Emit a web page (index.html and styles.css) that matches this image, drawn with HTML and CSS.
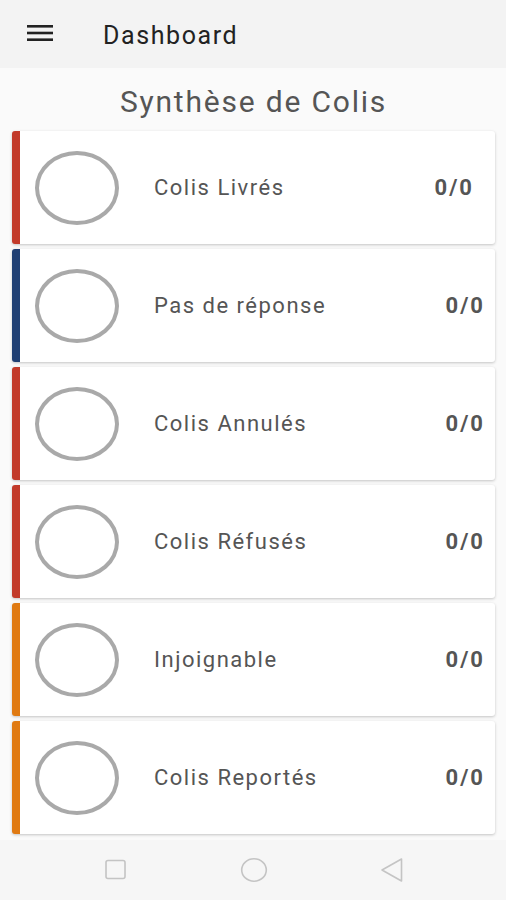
FILE: index.html
```html
<!DOCTYPE html>
<html lang="fr">
<head>
  <meta charset="UTF-8">
  <title>Dashboard</title>
  <link rel="stylesheet" href="styles.css">
</head>
<body>
  <header class="topbar">
    <svg class="menu-icon" width="26" height="18" viewBox="0 0 26 18">
      <rect x="0" y="1" width="26" height="2.6" fill="#222"/>
      <rect x="0" y="7.7" width="26" height="2.6" fill="#222"/>
      <rect x="0" y="14.4" width="26" height="2.6" fill="#222"/>
    </svg>
    <h1>Dashboard</h1>
  </header>

  <main class="content">
    <h2>Synthèse de Colis</h2>

    <div class="card red first">
      <div class="ring"></div>
      <span class="label">Colis Livrés</span>
      <span class="value">0/0</span>
    </div>

    <div class="card blue">
      <div class="ring"></div>
      <span class="label">Pas de réponse</span>
      <span class="value">0/0</span>
    </div>

    <div class="card red">
      <div class="ring"></div>
      <span class="label">Colis Annulés</span>
      <span class="value">0/0</span>
    </div>

    <div class="card red">
      <div class="ring"></div>
      <span class="label">Colis Réfusés</span>
      <span class="value">0/0</span>
    </div>

    <div class="card orange">
      <div class="ring"></div>
      <span class="label">Injoignable</span>
      <span class="value">0/0</span>
    </div>

    <div class="card orange">
      <div class="ring"></div>
      <span class="label">Colis Reportés</span>
      <span class="value">0/0</span>
    </div>
  </main>

  <nav class="navbar">
    <svg width="24" height="24" viewBox="0 0 24 24">
      <rect x="2" y="2.5" width="19" height="18" rx="2" fill="none" stroke="#c4c4c4" stroke-width="1.6"/>
    </svg>
    <svg width="28" height="26" viewBox="0 0 28 26">
      <ellipse cx="14" cy="13" rx="12.3" ry="11.2" fill="none" stroke="#c4c4c4" stroke-width="1.6"/>
    </svg>
    <svg width="24" height="26" viewBox="0 0 24 26">
      <path d="M21.5 2 L21.5 24 L2 13 Z" fill="none" stroke="#c4c4c4" stroke-width="1.6" stroke-linejoin="round"/>
    </svg>
  </nav>
</body>
</html>
```

FILE: styles.css
```css
body {
  margin: 0;
  padding: 0;
  font-family: Roboto, "Noto Sans", sans-serif;
  background: #fafafa;
  width: 506px;
  height: 900px;
  display: flex;
  flex-direction: column;
  overflow: hidden;
}

.topbar {
  height: 68px;
  background: #f3f3f3;
  display: flex;
  align-items: center;
  padding-left: 27px;
  flex-shrink: 0;
}

.menu-icon {
  margin-top: -2px;
}

.topbar h1 {
  margin: 3px 0 0 50px;
  font-size: 25px;
  font-weight: 400;
  letter-spacing: 1.6px;
  color: #222;
}

.content {
  flex: 1;
  padding: 0 11px 0 12px;
}

.content h2 {
  margin: 15px 0 10px;
  text-align: center;
  font-size: 30px;
  font-weight: 400;
  letter-spacing: 1.8px;
  color: #555;
  line-height: 38px;
}

.card {
  height: 113px;
  margin-bottom: 5px;
  background: #fff;
  border-left: 8px solid #c0392b;
  border-radius: 3px;
  box-shadow: 0 1px 3px rgba(0,0,0,0.22);
  display: flex;
  align-items: center;
  padding: 0 10px 0 15px;
}

.card.blue {
  border-left-color: #1f3f73;
}

.card.orange {
  border-left-color: #e07a12;
}

.card.red {
  border-left-color: #c23a2a;
}

.ring {
  width: 76px;
  height: 66px;
  border: 4px solid #a9a9a9;
  border-radius: 50%;
  flex-shrink: 0;
}

.label {
  flex: 1;
  margin-left: 35px;
  font-size: 22px;
  letter-spacing: 1.5px;
  color: #555;
}

.value {
  font-size: 22px;
  font-weight: 700;
  letter-spacing: 2px;
  color: #555;
}

.card.first .value {
  margin-right: 11px;
}

.navbar {
  height: 60px;
  background: #f6f6f6;
  display: flex;
  align-items: center;
  padding-left: 104px;
  gap: 112px;
  flex-shrink: 0;
}
```
